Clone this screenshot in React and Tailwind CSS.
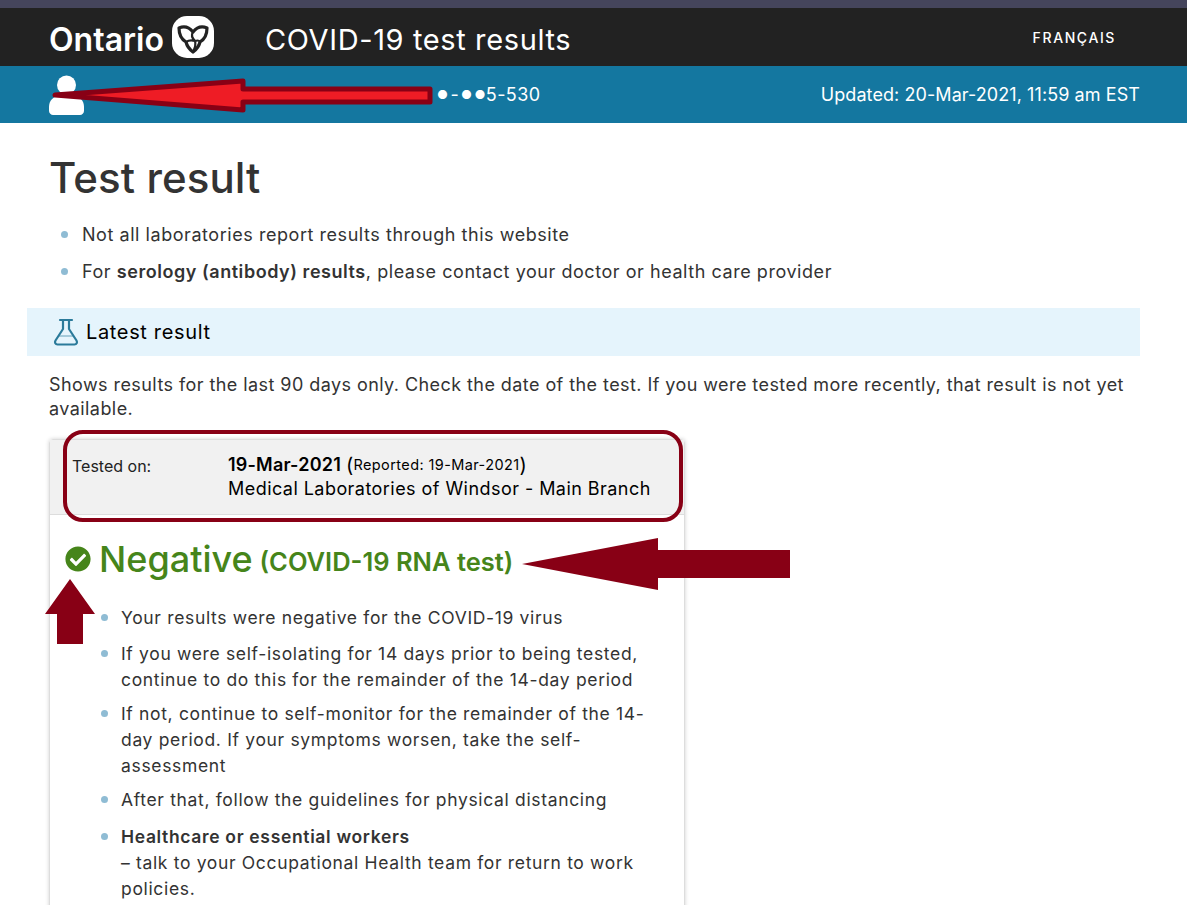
import { FaCheckCircle } from 'react-icons/fa'

const font = { fontFamily: 'Inter, "Noto Sans", sans-serif' }

function Bullet({ children, className = '' }) {
  return (
    <li className={`relative pl-[33px] ${className}`}>
      <span className="absolute left-[12px] top-[10px] h-[7px] w-[7px] rounded-full bg-[#8fbcd4]" />
      {children}
    </li>
  )
}

function ResultBullet({ children, className = '' }) {
  return (
    <li className={`relative ${className}`}>
      <span className="absolute left-[-20px] top-[9px] h-[7px] w-[7px] rounded-full bg-[#8fbcd4]" />
      {children}
    </li>
  )
}

function Trillium() {
  return (
    <svg width="42" height="42" viewBox="0 0 42 42" className="shrink-0">
      <rect width="42" height="42" rx="15" fill="#fff" />
      <g fill="none" stroke="#222" strokeLinejoin="round" strokeLinecap="round">
        <path strokeWidth="3.200" d="M7 12c5-2 10-1 14 4 4-5 9-6 14-4 0 6-2 11-7 14-1 4-3 7-7 10-4-3-6-6-7-10-5-3-7-8-7-14z" />
        <path strokeWidth="2.200" d="M21 16c-2 3-1 6 2 9 1 3 0 7-2 11M14 26c3-2 6-2 9-1M28 26c-1-2-2-2-5-1" />
      </g>
    </svg>
  )
}

function Flask() {
  return (
    <svg width="26" height="28" viewBox="0 0 26 28" fill="none" stroke="#2a7a9a" strokeWidth="2.200" strokeLinejoin="round" strokeLinecap="round">
      <path d="M7 2h12M10 2v9L2.500 22.500c-1.200 2.200 0 4 2 4h17c2 0 3.200-1.800 2-4L16 11V2" />
      <path d="M6.500 18h13" strokeOpacity="0.35" />
    </svg>
  )
}

function Annotations() {
  return (
    <svg className="pointer-events-none absolute left-0 top-0" width="1187" height="905">
      <path d="M55 95L243 81V89H430V102H243V110Z" fill="#ee1c25" stroke="#880015" strokeWidth="5" strokeLinejoin="round" />
      <rect x="65" y="432" width="616" height="88" rx="18" fill="none" stroke="#880015" strokeWidth="4" />
      <path d="M522 564L658 538V550H790V578H658V590Z" fill="#880015" />
      <path d="M70 579L95 614H83V644H57V614H45Z" fill="#880015" />
    </svg>
  )
}

export default function App() {
  return (
    <div className="relative h-[905px] overflow-hidden bg-white text-[#333]" style={font}>
      <div className="h-2 bg-[#45455c]" />

      <header className="flex h-[58px] items-center bg-[#222] pl-[49px] pr-[71px] text-white">
        <span className="w-[115px] mt-[5px] text-[32px] font-semibold leading-none">Ontario</span>
        <span className="ml-[8px]"><Trillium /></span>
        <h1 className="ml-[51px] mt-[5px] text-[29px] font-normal leading-none tracking-[0.62px]">COVID-19 test results</h1>
        <a className="ml-auto text-[14px] font-medium tracking-[1.6px]">FRANÇAIS</a>
      </header>

      <div className="flex h-[57px] items-center bg-[#1477a0] pl-[49px] pr-[47px] text-white">
        <svg width="35" height="40" viewBox="0 0 35 40" fill="#fff" className="mt-[1px] shrink-0">
          <circle cx="17.500" cy="10" r="9.500" />
          <path d="M0 32c0-7 5-11 10-11h15c5 0 10 4 10 11v4c0 2-2 4-4 4H4c-2 0-4-2-4-4z" />
        </svg>
        <span className="ml-[353px] flex items-center text-[18px] tracking-[0.4px]">
          <span className="text-[12px]">●</span>
          <span className="mx-[2px]">-</span>
          <span className="text-[12px]">●</span>
          <span className="ml-[2px] text-[12px]">●</span>
          <span>5-530</span>
        </span>
        <span className="ml-auto text-[18px] tracking-[0.08px]">Updated: 20-Mar-2021, 11:59 am EST</span>
      </div>

      <main className="px-[49px]">
        <h2 className="mt-[32px] text-[42px] font-medium leading-[46px] tracking-[0.1px]">Test result</h2>

        <ul className="mt-[20px] text-[18px] leading-[27px] tracking-[0.55px]">
          <Bullet>Not all laboratories report results through this website</Bullet>
          <Bullet className="mt-[10px]">
            For <b className="font-semibold">serology (antibody) results</b>, please contact your doctor or health care provider
          </Bullet>
        </ul>

        <div className="ml-[-22px] mt-[23px] flex h-[48px] w-[1113px] items-center bg-[#e5f4fc] pl-[26px] text-black">
          <Flask />
          <span className="ml-[7px] text-[20px] tracking-[0.65px]">Latest result</span>
        </div>

        <p className="mt-[17px] text-[18px] leading-[24px] tracking-[0.43px]">
          Shows results for the last 90 days only. Check the date of the test. If you were tested more recently, that result is not yet available.
        </p>

        <section className="mt-[18px] h-[600px] w-[636px] rounded-t-[4px] border border-[#ddd] shadow-[0_0_4px_rgba(0,0,0,0.18)]">
          <div className="flex h-[75px] border-b border-[#ddd] bg-[#f1f1f1] pl-[22px] pt-[13px] text-black">
            <span className="w-[156px] pt-[1px] text-[16px] leading-[24px] text-[#222]">Tested on:</span>
            <div className="text-[18px] leading-[24px] tracking-[0.2px]">
              <div className="flex items-center">
                <b className="font-semibold">19-Mar-2021</b>
                <span className="ml-[5px] text-[20px] leading-[24px]">(</span>
                <span className="text-[14.500px] tracking-[0.4px]">Reported: 19-Mar-2021</span>
                <span className="text-[20px] leading-[24px]">)</span>
              </div>
              <div className="tracking-[0.45px]">Medical Laboratories of Windsor - Main Branch</div>
            </div>
          </div>

          <div className="mt-[21px] flex items-center pl-[15px] text-[#46851a]">
            <FaCheckCircle size={26} className="shrink-0" />
            <span className="ml-[8px] text-[36px] font-medium leading-[46px]">Negative</span>
            <span className="ml-[7px] mt-[5px] text-[25.500px] font-semibold leading-[36px]">(COVID-19 RNA test)</span>
          </div>

          <ul className="ml-[71px] mr-[30px] mt-[23px] text-[17.500px] leading-[26px] tracking-[0.66px]">
            <ResultBullet>Your results were negative for the COVID-19 virus</ResultBullet>
            <ResultBullet className="mt-[10px]">If you were self-isolating for 14 days prior to being tested, continue to do this for the remainder of the 14-day period</ResultBullet>
            <ResultBullet className="mt-[8px]">If not, continue to self-monitor for the remainder of the 14-day period. If your symptoms worsen, take the self-assessment</ResultBullet>
            <ResultBullet className="mt-[8px]">After that, follow the guidelines for physical distancing</ResultBullet>
            <ResultBullet className="mt-[11px]">
              <b className="font-semibold">Healthcare or essential workers</b>
              <br />– talk to your Occupational Health team for return to work policies.
            </ResultBullet>
          </ul>
        </section>
      </main>

      <Annotations />
    </div>
  )
}
